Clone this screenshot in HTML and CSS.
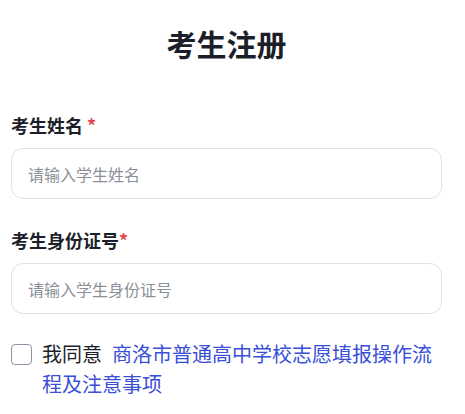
FILE: index.html
```html
<!DOCTYPE html>
<html lang="zh-CN">
<head>
<meta charset="utf-8">
<title>考生注册</title>
<link rel="stylesheet" href="styles.css">
</head>
<body>
<main class="page">
  <h1 class="title">考生注册</h1>
  <div class="field">
    <label class="label">考生姓名 <span class="req">*</span></label>
    <input class="input" type="text" placeholder="请输入学生姓名">
  </div>
  <div class="field">
    <label class="label">考生身份证号<span class="req">*</span></label>
    <input class="input" type="text" placeholder="请输入学生身份证号">
  </div>
  <div class="agree">
    <span class="check"></span>
    <p class="agree-text"><span class="agree-word">我同意</span><a class="link" href="#">商洛市普通高中学校志愿填报操作流程及注意事项</a></p>
  </div>
</main>
</body>
</html>
```
FILE: styles.css
```css
* { box-sizing: border-box; }
body {
  margin: 0;
  background: #ffffff;
  font-family: "Noto Sans CJK SC", "Noto Sans", sans-serif;
  color: #1c1f2a;
}
.page {
  padding: 23px 23px 0 11px;
}
.title {
  margin: 0;
  text-align: center;
  font-size: 30px;
  line-height: 40px;
  font-weight: 700;
  color: #1c1f2a;
}
.field {
  display: flex;
  flex-direction: column;
  gap: 11px;
  margin-top: 29px;
}
.field:first-of-type { margin-top: 50px; }
.label {
  font-size: 18px;
  line-height: 24px;
  font-weight: 700;
  color: #1c1f2a;
}
.req { color: #e5484d; font-weight: 700; }
.input {
  display: block;
  width: 100%;
  height: 51px;
  border: 1px solid #dfe1e6;
  border-radius: 12px;
  padding: 0 16px;
  font-family: inherit;
  font-size: 16px;
  color: #333;
  background: #fff;
  outline: none;
}
.input::placeholder { color: #8b8f98; }
.agree {
  display: flex;
  align-items: flex-start;
  gap: 10px;
  margin-top: 25px;
}
.check {
  flex: none;
  width: 21px;
  height: 21px;
  margin-top: 5px;
  border: 1.5px solid #8c93a3;
  border-radius: 4px;
  background: #fff;
}
.agree-text {
  margin: 0;
  font-size: 20px;
  line-height: 30px;
  color: #1c1f2a;
}
.agree-word { margin-right: 10px; }
.link {
  color: #3a4fd9;
  text-decoration: none;
}
```
